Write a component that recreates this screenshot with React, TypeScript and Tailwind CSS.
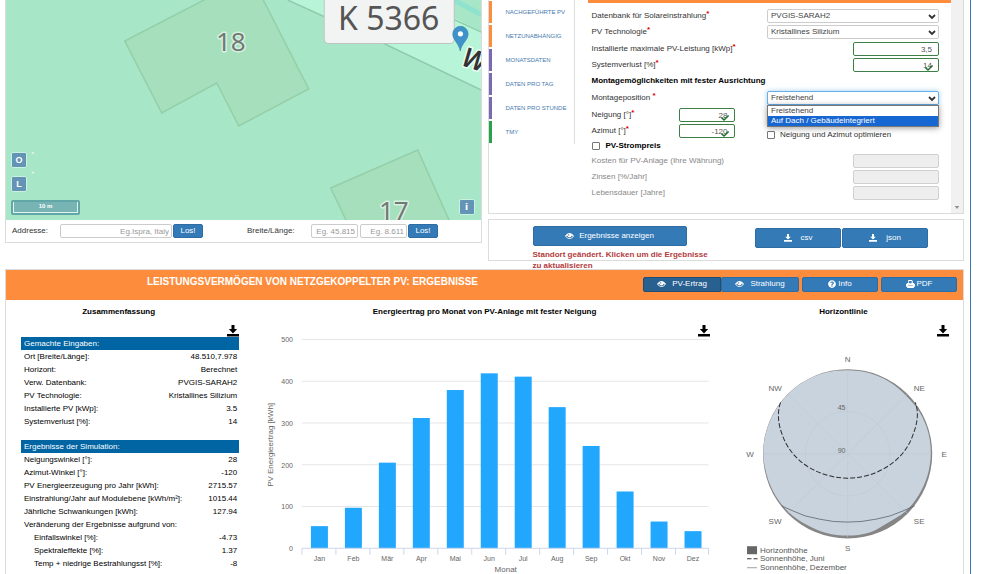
import { useState } from "react";
import { FaCheck, FaQuestionCircle } from "react-icons/fa";

type Row = { label: string; value: string; indent?: boolean };

const navItems = [
  { label: "NACHGEFÜHRTE PV", bar: "bg-[#fd8d3c]" },
  { label: "NETZUNABHÄNGIG", bar: "bg-[#fd8d3c]" },
  { label: "MONATSDATEN", bar: "bg-[#7a68b3]" },
  { label: "DATEN PRO TAG", bar: "bg-[#7a68b3]" },
  { label: "DATEN PRO STUNDE", bar: "bg-[#7a68b3]" },
  { label: "TMY", bar: "bg-[#2aa24c]" },
];

const inputRows: Row[] = [
  { label: "Ort [Breite/Länge]:", value: "48.510,7.978" },
  { label: "Horizont:", value: "Berechnet" },
  { label: "Verw. Datenbank:", value: "PVGIS-SARAH2" },
  { label: "PV Technologie:", value: "Kristallines Silizium" },
  { label: "Installierte PV [kWp]:", value: "3.5" },
  { label: "Systemverlust [%]:", value: "14" },
];

const resultRows: Row[] = [
  { label: "Neigungswinkel [°]:", value: "28" },
  { label: "Azimut-Winkel [°]:", value: "-120" },
  { label: "PV Energieerzeugung pro Jahr [kWh]:", value: "2715.57" },
  { label: "Einstrahlung/Jahr auf Modulebene [kWh/m²]:", value: "1015.44" },
  { label: "Jährliche Schwankungen [kWh]:", value: "127.94" },
  { label: "Veränderung der Ergebnisse aufgrund von:", value: "" },
  { label: "Einfallswinkel [%]:", value: "-4.73", indent: true },
  { label: "Spektraleffekte [%]:", value: "1.37", indent: true },
  { label: "Temp + niedrige Bestrahlungsst [%]:", value: "-8", indent: true },
  { label: "Gesamtverlust [%]:", value: "-23.59" },
];

const months = [
  { name: "Jan", kwh: 53 },
  { name: "Feb", kwh: 97 },
  { name: "Mär", kwh: 205 },
  { name: "Apr", kwh: 312 },
  { name: "Mai", kwh: 379 },
  { name: "Jun", kwh: 419 },
  { name: "Jul", kwh: 411 },
  { name: "Aug", kwh: 338 },
  { name: "Sep", kwh: 245 },
  { name: "Okt", kwh: 136 },
  { name: "Nov", kwh: 64 },
  { name: "Dez", kwh: 41 },
];

// horizon height in chart units, one value per 15 degrees, clockwise from north
const horizon = [1, 1, 1.4, 2, 1.4, 1.2, 1.4, 1.8, 2.4, 3, 4.8, 2.8, 2.8, 2.6, 2.6, 1.6, 1.2, 1, 0.3, 0.3, 0.3, 0.3, 0.3, 0.5];

const btn = "flex items-center justify-center rounded-[2px] border border-[#2e6da4] bg-[#337ab7] text-[8px] text-white hover:bg-[#286090]";
const card = "border border-[#dcdcdc] bg-white";
const field = "h-[14px] rounded-[2px] border bg-white text-right text-[8px] text-[#555] outline-none";
const mapBtn = "flex h-4 w-4 items-center justify-center rounded-[2px] border border-[#c9f2e0] bg-[#6394b5] text-[9px] font-bold text-white";

function DownloadIcon({ className }: { className: string }) {
  return (
    <svg viewBox="0 0 12 12" className={className} fill="currentColor" aria-hidden="true">
      <path d="M4.5 0h3v4h2.7L6 8.4 1.8 4h2.7zM0 9h12v2.6H0z" />
    </svg>
  );
}

function EyeIcon() {
  return (
    <svg viewBox="0 0 18 12" className="h-[6px] w-[9px]" aria-hidden="true">
      <path d="M0 6C3 2 6 0 9 0s6 2 9 6c-3 4-6 6-9 6S3 10 0 6z" fill="#fff" />
      <path d="M2.500 6.500C4 9 6.500 10.300 9 10.300s5-1.300 6.500-3.800L13.500 5c-.5 2.500-2.200 4-4.500 4S5 7.500 4.500 5z" fill="#286090" />
      <circle cx="7.500" cy="3.800" r="1.200" fill="#286090" />
    </svg>
  );
}

function PrintIcon() {
  return (
    <svg viewBox="0 0 16 14" className="h-2 w-[9px]" aria-hidden="true">
      <path d="M4 0h6.500L12 1.500V5h2l2 3v4h-2.500l.8 2H1.700l.8-2H0V8l2-3h2z" fill="#fff" />
      <path d="M5.500 1.800h4.500V5.500H5.500zM4 9.500h8v1H4z" fill="#337ab7" />
    </svg>
  );
}

function Req() {
  return <sup className="top-[-2px] text-[8px] leading-none font-bold text-[#d00]">*</sup>;
}

function Chevron() {
  return (
    <svg viewBox="0 0 8 6" className="pointer-events-none absolute top-[5px] right-[3px] h-[6px] w-2" fill="none" stroke="#333" strokeWidth="1.8">
      <path d="M1 1l3 3 3-3" />
    </svg>
  );
}

function SelectRow({ id, label, options, focused, children }: { id: string; label: string; options: string[]; focused?: boolean; children?: React.ReactNode }) {
  const [value, setValue] = useState(options[0]);
  return (
    <div className="flex h-4 items-center justify-between">
      <label htmlFor={id}>{label}<Req /></label>
      <div className="relative w-[172px]">
        <select
          id={id}
          value={value}
          onChange={(e) => setValue(e.target.value)}
          className={`block h-[14px] w-full appearance-none rounded-[2px] border bg-white pl-[3px] text-[8px] leading-none text-[#444] outline-none ${focused ? "border-[#66afe9] shadow-[0_0_5px_#9fcdf0]" : "border-[#ccc]"}`}
        >
          {options.map((o) => <option key={o}>{o}</option>)}
        </select>
        <Chevron />
        {children}
      </div>
    </div>
  );
}

function NumberField({ id, value, checked, className }: { id: string; value: string; checked?: boolean; className: string }) {
  return (
    <div className={`relative ${className}`}>
      <input id={id} defaultValue={value} className={`${field} block w-full border-[#3c8048] pr-[6px]`} />
      {checked && <FaCheck className="pointer-events-none absolute right-[6px] bottom-0 h-2 w-2 text-[#1e7030]" />}
    </div>
  );
}

function MapPanel() {
  return (
    <div className={`${card} border-t-0 border-[#c4c4c4]`}>
      <div className="relative h-[220px] overflow-hidden bg-[#a8e6c8]">
        <svg viewBox="6 0 475 220" preserveAspectRatio="xMidYMid slice" className="block h-full w-full">
          <rect x="0" y="0" width="490" height="220" fill="#a8e6c8" />
          <path d="M288 0L323 16L383 43L490 94V36L420 0z" fill="#b8f5d8" />
          <path d="M288 0L323 16L383 43L490 94M412 0L490 36" fill="none" stroke="#8ecdac" strokeWidth="1.5" />
          <path d="M450 -2L490 19" stroke="#8fe2cd" strokeWidth="5" />
          <path d="M125 41L210 -3H262L309 89L239 126L217 83L162 113z" fill="#a5dfbb" stroke="#94cfa9" strokeWidth="1.5" />
          <path d="M331 188L418 150L452 226H349z" fill="#a5dfbb" stroke="#94cfa9" strokeWidth="1.5" />
          <g fontFamily="'Noto Sans', sans-serif" textAnchor="middle" paintOrder="stroke" strokeLinejoin="round">
            <text x="231" y="51" fontSize="26" fill="#6f7a73" stroke="#d8f0e2" strokeWidth="3">18</text>
            <text x="394" y="220" fontSize="26" fill="#6f7a73" stroke="#d8f0e2" strokeWidth="3">17</text>
            <rect x="325" y="-8" width="129" height="51" rx="4" fill="#f2f3f3" stroke="#bfc4c2" strokeWidth="2" />
            <text x="389" y="30" fontSize="32" fill="#555">K 5366</text>
            <text x="474" y="69" fontSize="27" fontWeight="600" fontStyle="italic" fill="#333" stroke="#e9fff4" strokeWidth="3" transform="rotate(18 474 62)">W</text>
          </g>
          <path d="M460.500 51C459 43 453 40 453 34a7.700 7.700 0 0 1 15.400 0C468.400 40 462 43 460.500 51z" fill="#3f93c8" stroke="#3482b4" strokeWidth=".6" />
          <circle cx="460.700" cy="33.800" r="2.600" fill="#fff" />
          <path d="M32 153h2.500M32 172.500h2.500" stroke="#dff8ec" strokeWidth="1.500" />
        </svg>
        <div className="absolute bottom-[5px] left-[5px] flex flex-col gap-2">
          <button className={mapBtn}>O</button>
          <button className={mapBtn}>L</button>
          <div className="h-[15px] w-[69px] rounded-[2px] border-2 border-[#61a7a8] bg-[#78b4b3]">
            <div className="h-full border border-t-0 border-[#e1f3ee] text-center text-[6px] leading-[9px] font-bold text-white">10 m</div>
          </div>
        </div>
        <button className={`${mapBtn} absolute right-[6px] bottom-[5px] font-['DejaVu_Sans',sans-serif]`}>i</button>
      </div>
      <form className="flex h-[22px] items-center pl-[6px]" onSubmit={(e) => e.preventDefault()}>
        <label htmlFor="address" className="w-12">Addresse:</label>
        <input id="address" placeholder="Eg.Ispra, Italy" className={`${field} w-28 border-[#ccc] pr-[2px] placeholder:text-[#999]`} />
        <button className={`${btn} ml-px h-[14px] w-[30px]`}>Los!</button>
        <label htmlFor="lat" className="ml-11 w-16">Breite/Länge:</label>
        <input id="lat" placeholder="Eg. 45.815" className={`${field} w-[47px] border-[#ccc] pr-[2px] placeholder:text-[#999]`} />
        <input id="lon" aria-label="Länge" placeholder="Eg. 8.611" className={`${field} ml-[2px] w-[47px] border-[#ccc] pr-[2px] placeholder:text-[#999]`} />
        <button className={`${btn} ml-px h-[14px] w-[30px]`}>Los!</button>
      </form>
    </div>
  );
}

function SettingsPanel() {
  return (
    <div className={`${card} flex h-[214px] border-t-0`}>
      <nav className="flex h-36 w-[86px] flex-col gap-[2px] border-r border-[#ddd] pt-px">
        {navItems.map((item) => (
          <a key={item.label} href="#" className="flex h-[22px] items-center text-[6px] text-[#4679ad]">
            <span className={`mr-[14px] h-full w-[3px] ${item.bar}`} />
            {item.label}
          </a>
        ))}
      </nav>
      <div className="ml-[13px] flex-1">
        <div className="h-[3px] bg-[#fd8d3c]" />
        <div className="mt-[5px] mr-3 ml-1">
          <SelectRow id="db" label="Datenbank für Solareinstrahlung" options={["PVGIS-SARAH2", "PVGIS-ERA5"]} />
          <SelectRow id="tech" label="PV Technologie" options={["Kristallines Silizium", "CIS", "CdTe"]} />
          <div className="mt-px flex h-4 items-center justify-between">
            <label htmlFor="peak">Installierte maximale PV-Leistung [kWp]<Req /></label>
            <NumberField id="peak" value="3,5" className="w-[86px]" />
          </div>
          <div className="flex h-4 items-center justify-between">
            <label htmlFor="loss">Systemverlust [%]<Req /></label>
            <NumberField id="loss" value="14" checked className="w-[86px]" />
          </div>
          <h3 className="flex h-4 items-center font-bold text-black">Montagemöglichkeiten mit fester Ausrichtung</h3>
          <div className="mt-px">
            <SelectRow id="mount" label="Montageposition " options={["Freistehend", "Auf Dach / Gebäudeintegriert"]} focused>
              <ul className="absolute top-[14px] left-0 z-10 w-full border border-[#777] bg-white text-[#444] shadow-[0_1px_6px_rgba(0,0,0,0.4)]">
                <li className="pl-[3px] leading-[10px]">Freistehend</li>
                <li className="bg-[#1767d2] pl-[3px] leading-[10px] text-white">Auf Dach / Gebäudeintegriert</li>
              </ul>
            </SelectRow>
          </div>
          <div className="mt-px flex h-4 items-center">
            <label htmlFor="slope" className="w-[87px]">Neigung [°]<Req /></label>
            <NumberField id="slope" value="28" checked className="w-[56px]" />
          </div>
          <div className="flex h-4 items-center justify-between">
            <div className="flex items-center">
              <label htmlFor="azimuth" className="w-[87px]">Azimut [°]<Req /></label>
              <NumberField id="azimuth" value="-120" checked className="w-[56px]" />
            </div>
            <label className="flex w-[172px] items-center gap-[5px] self-end leading-[8px]">
              <input type="checkbox" className="h-2 w-2 appearance-none rounded-[1px] border border-[#777] bg-white checked:bg-[#337ab7]" />
              Neigung und Azimut optimieren
            </label>
          </div>
          <label className="flex h-[14px] items-center gap-[6px] font-bold text-black">
            <input type="checkbox" className="h-2 w-2 appearance-none rounded-[1px] border border-[#777] bg-white checked:bg-[#337ab7]" />
            PV-Strompreis
          </label>
          {["Kosten für PV-Anlage (Ihre Währung)", "Zinsen [%/Jahr]", "Lebensdauer [Jahre]"].map((label) => (
            <label key={label} className="flex h-4 items-center justify-between text-[#888]">
              {label}
              <input disabled className="h-[14px] w-[86px] rounded-[2px] border border-[#d0d0d0] bg-[#eee]" />
            </label>
          ))}
        </div>
      </div>
      <div className="flex w-3 items-end justify-center bg-[#f1f1f1] pb-1">
        <svg viewBox="0 0 6 4" className="h-[3px] w-[6px]" fill="#8f8f8f"><path d="M0 0h6L3 4z" /></svg>
      </div>
    </div>
  );
}

function YieldChart() {
  const left = 302;
  const base = 548.5;
  const step = 34;
  const unit = 0.418;
  return (
    <svg viewBox="245 337 479 240" className="block w-full" role="img" aria-label="PV Energieertrag">
      <g fontSize="7" fill="#666">
        {[0, 100, 200, 300, 400, 500].map((v) => (
          <g key={v}>
            {v > 0 && <line x1={left} x2="709" y1={base - v * unit} y2={base - v * unit} stroke="#e6e6e6" />}
            <text x="293" y={base - v * unit + 3} textAnchor="end">{v}</text>
          </g>
        ))}
        {months.map((m, i) => (
          <g key={m.name}>
            <rect x={left + i * step + 9} y={base - m.kwh * unit} width="17" height={m.kwh * unit} fill="#22a7ff" />
            <text x={left + i * step + 17.5} y="561" textAnchor="middle">{m.name}</text>
            <line x1={left + i * step} x2={left + i * step} y1={base} y2="555" stroke="#ccd6eb" />
          </g>
        ))}
        <path d="M302 548.500H709V555" fill="none" stroke="#ccd6eb" />
      </g>
      <g fontSize="8" fill="#666" textAnchor="middle">
        <text x="506" y="572">Monat</text>
        <text x="273" y="445" transform="rotate(-90 273 445)">PV Energieertrag [kWh]</text>
      </g>
    </svg>
  );
}

function HorizonChart() {
  const cx = 847.5;
  const cy = 453.7;
  const r = 84.5;
  const sky = horizon
    .map((h, i) => {
      const a = (i * 15 * Math.PI) / 180;
      return [cx + (r - h) * Math.sin(a), cy - (r - h) * Math.cos(a)];
    });
  // closed Catmull-Rom curve through the sampled points
  const n = sky.length;
  const curve = sky
    .map((p, i) => {
      const a = sky[(i + n - 1) % n];
      const b = sky[(i + 1) % n];
      const c = sky[(i + 2) % n];
      return `C${p[0] + (b[0] - a[0]) / 6} ${p[1] + (b[1] - a[1]) / 6} ${b[0] - (c[0] - p[0]) / 6} ${b[1] - (c[1] - p[1]) / 6} ${b[0]} ${b[1]}`;
    })
    .join("");
  const compass: [string, number, number][] = [
    ["N", 847.5, 362], ["NE", 919, 391], ["E", 944, 457], ["SE", 919, 524],
    ["S", 847.5, 551], ["SW", 775, 524], ["W", 750, 457], ["NW", 775, 391],
  ];
  return (
    <svg viewBox="724 337 239 240" className="block w-full" role="img" aria-label="Horizontlinie">
      <circle cx={cx} cy={cy} r={r} fill="#858585" />
      <path d={`M${sky[0][0]} ${sky[0][1]}${curve}z`} fill="#c8d3dd" />
      <g stroke="#bfcad4" strokeWidth=".6" fill="none">
        <circle cx={cx} cy={cy} r={r / 2} />
        <path d="M847.500 370V537M764 453.700H931M788 394L907 513M907 394L788 513" />
      </g>
      <path d="M780.500 402.300C777 412 778 424 782 434C791 462 820 478 847.500 478C875 478 904 462 913 434C917 424 919 412 915 402.300" fill="none" stroke="#2d2d2d" strokeWidth="1" strokeDasharray="5 2" />
      <path d="M781.500 505.700Q793 511 805 515.700Q820 519.500 833.500 521.300Q847.500 522.500 861 521.300Q876 519.500 890 515.700Q903 511 914.500 505.700" fill="none" stroke="#5c646b" strokeWidth=".8" />
      <g fontSize="8" fill="#666" textAnchor="middle">
        {compass.map(([name, x, y]) => <text key={name} x={x} y={y}>{name}</text>)}
        <text x="841.500" y="410" fontSize="7">45</text>
        <text x="841.500" y="453" fontSize="7">90</text>
      </g>
      <g fontSize="8" fill="#555">
        <rect x="747" y="546" width="10" height="8" fill="#666" />
        <path d="M747 558.500h4.500M753.500 558.500h4" stroke="#333" />
        <path d="M747 567.500h10" stroke="#888" strokeWidth=".8" />
        <text x="760" y="553">Horizonthöhe</text>
        <text x="760" y="561">Sonnenhöhe, Juni</text>
        <text x="760" y="570">Sonnenhöhe, Dezember</text>
      </g>
    </svg>
  );
}

function SummaryTable({ title, rows }: { title: string; rows: Row[] }) {
  return (
    <table className="w-full whitespace-nowrap text-black">
      <thead>
        <tr><th colSpan={2} className="h-[13px] bg-[#0065a2] px-[3px] text-left font-normal text-white">{title}</th></tr>
      </thead>
      <tbody>
        {rows.map((row) => (
          <tr key={row.label} className="h-[13px]">
            <td className={row.indent ? "pl-[13px]" : "pl-[3px]"}>{row.label}</td>
            <td className="pr-[2px] text-right">{row.value}</td>
          </tr>
        ))}
      </tbody>
    </table>
  );
}

function Results() {
  const dl = "flex h-[13px] w-full justify-end text-black";
  const h2 = "h-6 text-center leading-6 font-bold text-black";
  return (
    <section className="mt-2 border border-[#dcdcdc] bg-white">
      <header className="flex h-[30px] items-center justify-between bg-[#fd8d3c] pr-[6px]">
        <h1 className="flex-1 pr-6 pb-[6px] text-center text-[10px] font-bold text-white">LEISTUNGSVERMÖGEN VON NETZGEKOPPELTER PV: ERGEBNISSE</h1>
        <div className="mb-[2px] flex h-[15px]">
          <button className="flex w-[78px] items-center justify-center gap-[6px] rounded-l-[2px] border border-[#204d74] bg-[#286090] text-[8px] text-white"><EyeIcon />PV-Ertrag</button>
          <button className={`${btn} w-[78px] gap-[6px]`}><EyeIcon />Strahlung</button>
          <button className={`${btn} ml-[3px] w-[76px] gap-[2px]`}><FaQuestionCircle className="h-2 w-2" />Info</button>
          <button className={`${btn} ml-[3px] w-[76px] gap-[2px]`}><PrintIcon />PDF</button>
        </div>
      </header>
      <div className="grid grid-cols-[1fr_2fr_1fr]">
        <div className="pr-[6px]">
          <h2 className={`${h2} pr-2`}>Zusammenfassung</h2>
          <div className={dl}><button aria-label="Download"><DownloadIcon className="h-3 w-3" /></button></div>
          <div className="flex flex-col gap-3 pl-[15px]">
            <SummaryTable title="Gemachte Eingaben:" rows={inputRows} />
            <SummaryTable title="Ergebnisse der Simulation:" rows={resultRows} />
          </div>
        </div>
        <div>
          <h2 className={h2}>Energieertrag pro Monat von PV-Anlage mit fester Neigung</h2>
          <div className={`${dl} pr-[14px]`}><button aria-label="Download"><DownloadIcon className="h-3 w-3" /></button></div>
          <YieldChart />
        </div>
        <div>
          <h2 className={h2}>Horizontlinie</h2>
          <div className={`${dl} pr-[14px]`}><button aria-label="Download"><DownloadIcon className="h-3 w-3" /></button></div>
          <HorizonChart />
        </div>
      </div>
    </section>
  );
}

export default function App() {
  return (
    <div className="h-screen overflow-hidden bg-white pr-[33px] font-['Liberation_Sans',Arial,sans-serif] text-[8px] leading-[10px] text-[#333]">
      <div className="min-h-full border-r border-[#3a7ab0] pr-[6px] pl-[5px]">
        <div className="grid grid-cols-2 items-start gap-[6px]">
          <MapPanel />
          <div>
            <SettingsPanel />
            <div className={`${card} relative z-10 mt-[5px] flex h-[42px] items-start justify-between pr-[35px] pl-11`}>
              <div className="w-[182px] pt-[6px]">
                <button className={`${btn} h-5 w-[154px] gap-[5px]`}><EyeIcon />Ergebnisse anzeigen</button>
                <p className="pt-[3px] leading-[11px] font-bold text-[#b33a3c]">Standort geändert. Klicken um die Ergebnisse zu aktualisieren</p>
              </div>
              <div className="flex gap-px pt-2">
                <button className={`${btn} h-5 w-[86px] gap-[9px]`}><DownloadIcon className="h-2 w-2" />csv</button>
                <button className={`${btn} h-5 w-[86px] gap-[9px]`}><DownloadIcon className="h-2 w-2" />json</button>
              </div>
            </div>
          </div>
        </div>
        <Results />
      </div>
    </div>
  );
}
